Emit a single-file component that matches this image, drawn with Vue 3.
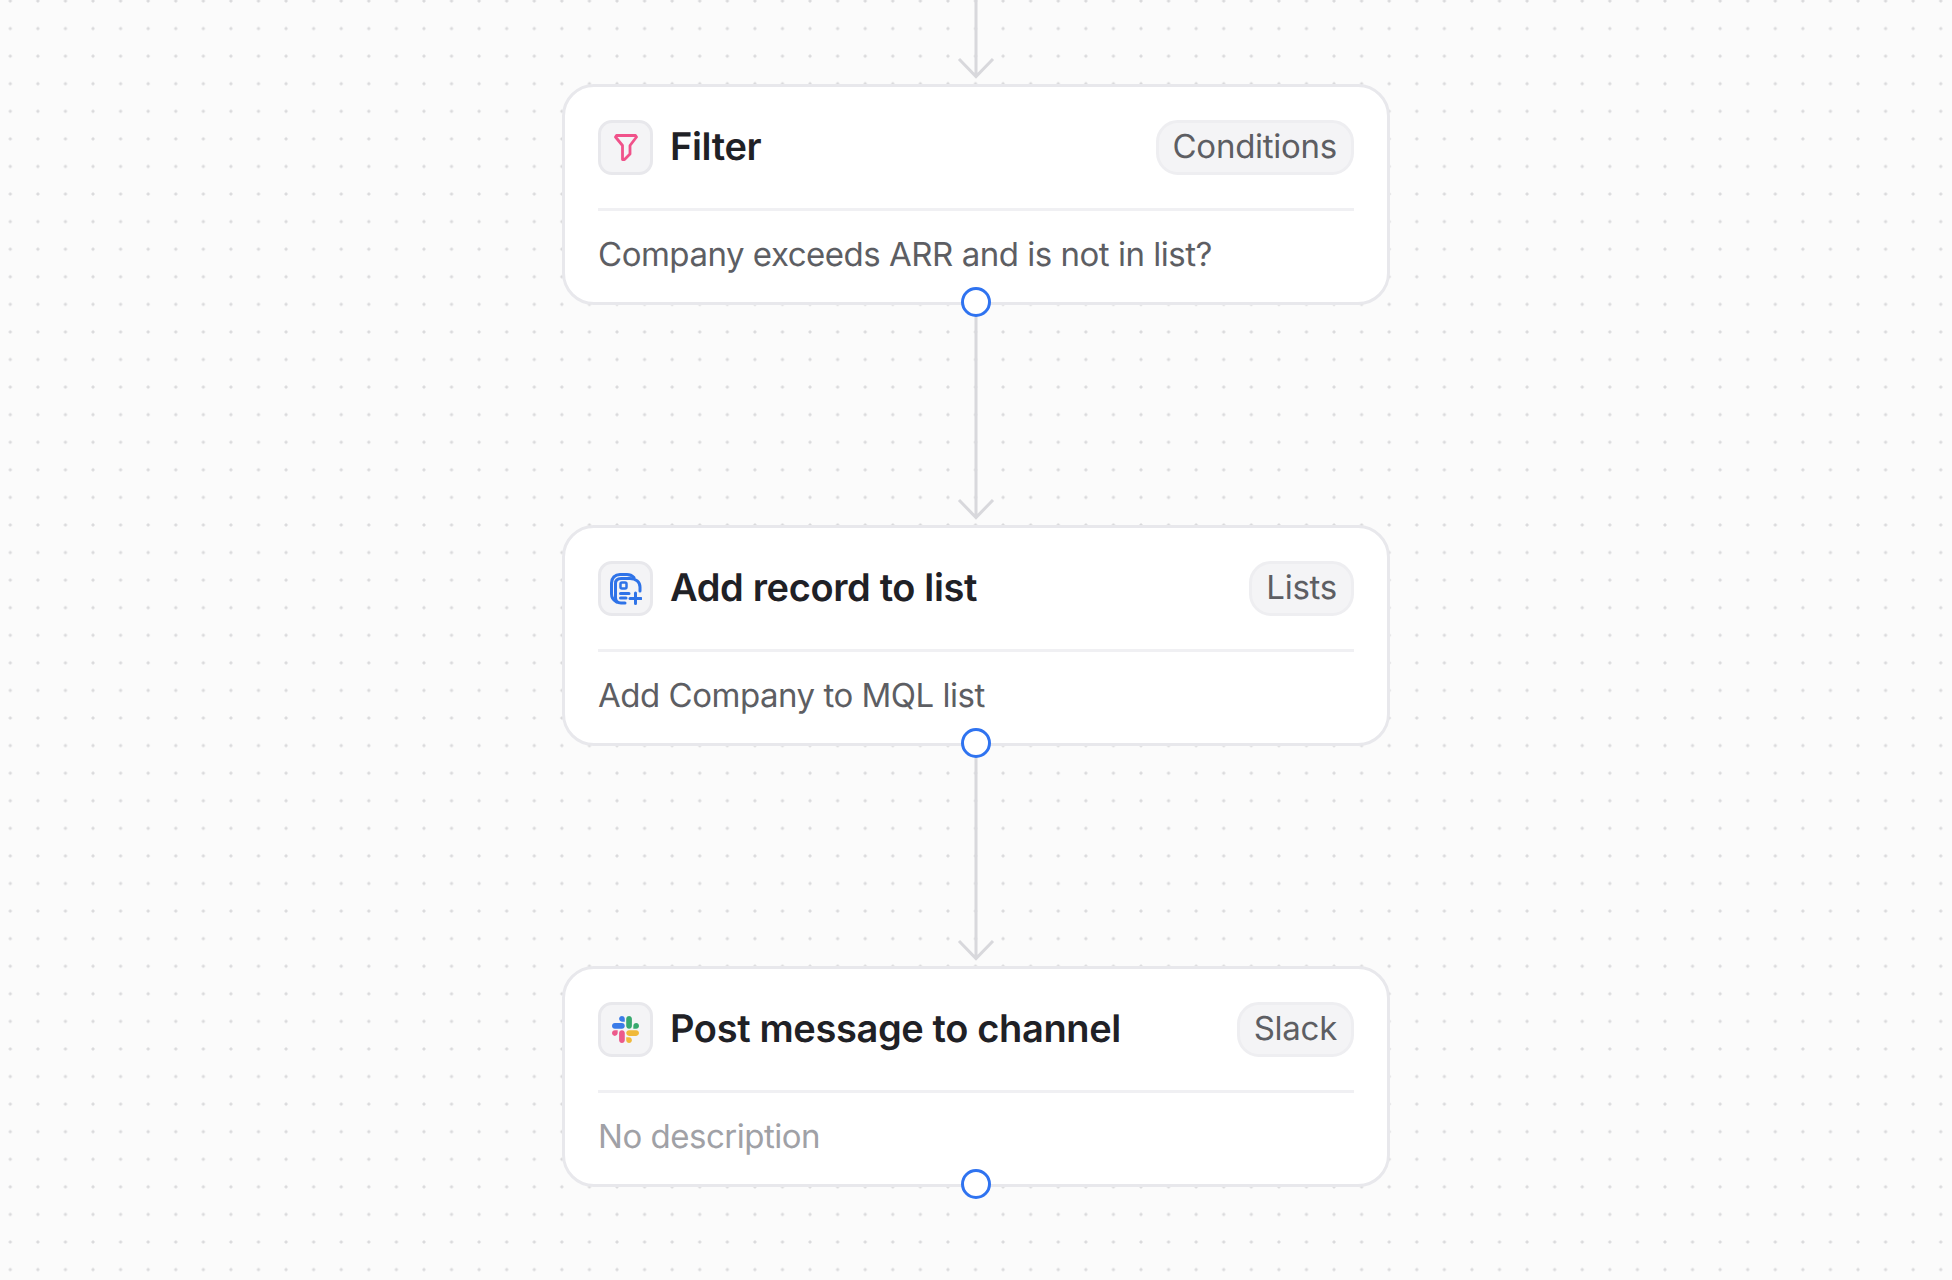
<script setup>
const steps = [
  { id: 'filter', title: 'Filter', tag: 'Conditions', desc: 'Company exceeds ARR and is not in list?', muted: false },
  { id: 'list', title: 'Add record to list', tag: 'Lists', desc: 'Add Company to MQL list', muted: false },
  { id: 'slack', title: 'Post message to channel', tag: 'Slack', desc: 'No description', muted: true },
]
</script>

<template>
  <main class="canvas">
    <svg class="connector first" width="40" height="84" viewBox="0 0 40 84" fill="none">
      <path d="M20 0V76M3 59L20 76.500L37 59" />
    </svg>
    <template v-for="(s, i) in steps" :key="s.id">
      <svg v-if="i > 0" class="connector" width="40" height="220" viewBox="0 0 40 220" fill="none">
        <path d="M20 0V212M3 195L20 212.500L37 195" />
      </svg>
      <section class="card">
        <header class="head">
          <span class="icon">
            <svg v-if="s.id === 'filter'" width="24" height="27" viewBox="0 0 24 27" fill="none">
              <path d="M2.500 1.500H21.500L22.500 3L16 11.500V20L10.500 25.500H8.500V11.500L1.500 3Z" stroke="#f0528a" stroke-width="2.800" stroke-linejoin="round" />
            </svg>
            <svg v-else-if="s.id === 'list'" width="32" height="32" viewBox="0 0 32 32" fill="none" stroke="#2f73e8" stroke-width="3" stroke-linecap="round" stroke-linejoin="round">
              <path d="M6.500 29C3 27 1.500 24.500 1.500 21V10C1.500 5 5 1.500 10 1.500H17C20 1.500 22 2.500 24 4.500" />
              <path d="M15 30H11C7.500 30 5.500 28 5.500 24.500V10.500C5.500 7 7.500 5.500 11 5.500H20C26 5.500 30 9 30 14V18" />
              <rect x="10.500" y="9.500" width="6" height="6" rx="1.500" stroke-width="2.500" />
              <path d="M10.500 20.500H19M10.500 25H16M25.500 20V30.500M20 25.500H31" />
            </svg>
            <svg v-else width="27" height="27" viewBox="0 0 122.800 122.800">
              <path d="M25.800 77.600c0 7.100-5.800 12.900-12.900 12.900S0 84.700 0 77.600s5.800-12.900 12.900-12.900h12.900v12.900zm6.500 0c0-7.100 5.800-12.900 12.900-12.900s12.900 5.800 12.900 12.900v32.300c0 7.100-5.800 12.900-12.900 12.900s-12.900-5.800-12.900-12.900V77.600z" fill="#ec5a8b" />
              <path d="M45.200 25.800c-7.100 0-12.900-5.800-12.900-12.900S38.100 0 45.200 0s12.900 5.800 12.900 12.900v12.900H45.200zm0 6.500c7.100 0 12.900 5.800 12.900 12.900s-5.800 12.900-12.900 12.900H12.900C5.800 58.100 0 52.300 0 45.200s5.800-12.900 12.900-12.900h32.300z" fill="#3a7be8" />
              <path d="M97 45.200c0-7.100 5.800-12.900 12.900-12.900s12.900 5.800 12.900 12.900-5.800 12.900-12.900 12.900H97V45.200zm-6.500 0c0 7.100-5.800 12.900-12.900 12.900s-12.900-5.800-12.900-12.900V12.900C64.700 5.800 70.500 0 77.600 0s12.900 5.800 12.900 12.900v32.300z" fill="#37a96f" />
              <path d="M77.600 97c7.100 0 12.900 5.800 12.900 12.900s-5.800 12.900-12.900 12.900-12.900-5.800-12.900-12.900V97h12.900zm0-6.500c-7.100 0-12.900-5.800-12.900-12.900s5.800-12.900 12.900-12.900h32.300c7.100 0 12.900 5.800 12.900 12.900s-5.800 12.900-12.900 12.900H77.600z" fill="#f0b93a" />
            </svg>
          </span>
          <h2 class="title">{{ s.title }}</h2>
          <span class="tag">{{ s.tag }}</span>
        </header>
        <p class="desc" :class="{ muted: s.muted }">{{ s.desc }}</p>
        <span class="handle"></span>
      </section>
    </template>
  </main>
</template>

<style scoped>
.canvas {
  width: 1952px;
  height: 1280px;
  overflow: hidden;
  display: flex;
  flex-direction: column;
  align-items: center;
  background-color: #fbfbfb;
  background-image: radial-gradient(circle, #dadadc 0, #dadadc 1.200px, transparent 1.900px);
  background-size: 27.580px 27.580px;
  background-position: -3.500px -12.800px;
  font-family: Inter, "Liberation Sans", sans-serif;
  text-rendering: geometricPrecision;
}
.connector {
  display: block;
  flex: none;
}
.connector path {
  stroke: #d8d8dc;
  stroke-width: 3;
}
.card {
  position: relative;
  box-sizing: border-box;
  flex: none;
  width: 828px;
  height: 221px;
  padding: 33px 33px 0;
  background: #fff;
  border: 3px solid #e8e8ec;
  border-radius: 32px;
}
.head {
  display: flex;
  align-items: center;
  gap: 17px;
  height: 55px;
  padding-bottom: 33px;
  border-bottom: 3px solid #f0f0f3;
}
.icon {
  box-sizing: border-box;
  width: 55px;
  height: 55px;
  flex: none;
  display: flex;
  align-items: center;
  justify-content: center;
  background: #f4f4f6;
  border: 3px solid #e8e8ec;
  border-radius: 14px;
}
.title {
  flex: 1;
  margin: 0;
  padding-bottom: 2px;
  font-size: 38px;
  font-weight: 600;
  letter-spacing: -0.360px;
  color: #1f2126;
}
.tag {
  box-sizing: border-box;
  height: 55px;
  display: flex;
  align-items: center;
  padding: 0 14px 4px;
  font-size: 33px;
  letter-spacing: -0.260px;
  color: #5d5e63;
  background: #f4f4f6;
  border: 3px solid #eeeef1;
  border-radius: 22px;
}
.desc {
  margin: 22px 0 0;
  font-size: 33px;
  line-height: 42px;
  letter-spacing: -0.480px;
  color: #5d5e63;
}
.desc.muted {
  color: #a0a1a6;
}
.handle {
  position: absolute;
  left: 50%;
  bottom: -15px;
  box-sizing: border-box;
  width: 30px;
  height: 30px;
  margin-left: -15px;
  background: #fff;
  border: 3px solid #2f73f0;
  border-radius: 50%;
}
</style>
